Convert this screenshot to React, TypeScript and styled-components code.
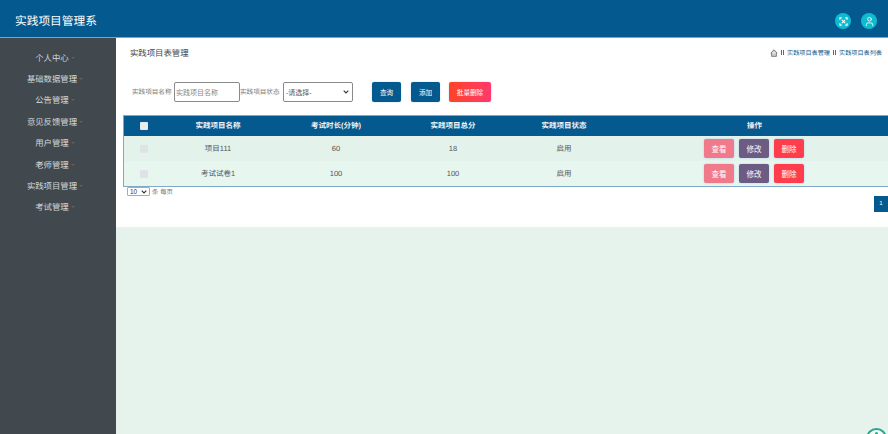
import React from "react";
import styled, { createGlobalStyle } from "styled-components";
import { User } from "lucide-react";

const arrow = `url("data:image/svg+xml,%3Csvg xmlns='http://www.w3.org/2000/svg' width='6' height='4' viewBox='0 0 6 4'%3E%3Cpath d='M.7.7 3 3 5.3.7' fill='none' stroke='%23333' stroke-width='1.1'/%3E%3C/svg%3E")`;

const Global = createGlobalStyle`
  html, body { margin: 0; padding: 0; height: 100%; overflow: hidden; }
  body { font-family: "Liberation Sans", "Noto Sans CJK SC", sans-serif; background: #e6f2ec; text-rendering: geometricPrecision; }
  #root { height: 100%; }
  * { box-sizing: border-box; }
`;

const Page = styled.div`
  display: flex; flex-direction: column; width: 888px; height: 434px; position: relative; overflow: hidden;
`;
const Header = styled.header`
  height: 38px; flex: none; background: #04598e; display: flex; align-items: center;
  padding: 0 11px 0 15px; justify-content: space-between; border-bottom: 1px solid #7ba6c4;
`;
const Brand = styled.div`
  color: #fff; font-size: 11.7px; line-height: 1; margin-top: 7px;
`;
const HeaderIcons = styled.div`
  display: flex; gap: 10px; margin-top: 5px;
`;
const RoundIcon = styled.span`
  width: 16px; height: 16px; border-radius: 50%; background: #0fbccf; color: #fff;
  display: flex; align-items: center; justify-content: center;
`;
const Body = styled.div`
  display: flex; flex: 1; min-height: 0;
`;
const Sidebar = styled.nav`
  width: 116px; flex: none; background: #41494e; padding-top: 9px;
  display: flex; flex-direction: column;
`;
const MenuItem = styled.div`
  height: 21.4px; padding-right: 12px; display: flex; align-items: center; justify-content: center;
  color: #d4d8d8; font-size: 8.4px; gap: 2px;
`;
const Caret = styled.span`
  width: 0; height: 0; border-left: 2px solid transparent; border-right: 2px solid transparent;
  border-top: 2px solid #5a6368; margin-right: -6px;
`;
const Main = styled.main`
  flex: 1; min-width: 0;
`;
const Card = styled.section`
  background: #fff; height: 189px; padding: 0 0 0 7px; display: flex; flex-direction: column;
`;
const TopRow = styled.div`
  height: 29px; padding: 0 6px 0 7px; display: flex; align-items: center; justify-content: space-between;
`;
const Title = styled.h2`
  margin: 0; font-weight: 400; font-size: 8.4px; color: #444;
`;
const Crumbs = styled.div`
  display: flex; align-items: center; gap: 3px; font-size: 6.15px; color: #04598e;
`;
const Sep = styled.span`
  width: 3px; height: 5px; border-left: 1px solid #5a6a74; border-right: 1px solid #5a6a74;
`;
const Toolbar = styled.div`
  height: 20px; margin-top: 15px; padding-left: 9px; display: flex; align-items: center;
`;
const FieldLabel = styled.label`
  font-size: 6.6px; color: #777; width: 42px; flex: none; white-space: nowrap; margin-top: -2px;
`;
const TextInput = styled.input`
  width: 66px; height: 20px; border: 1px solid #8a8a8a; border-radius: 2px; padding: 0 0 0 1px;
  font: 7px "Liberation Sans", "Noto Sans CJK SC", sans-serif; background: #fff;
  &::placeholder { color: #888; }
`;
const SelectBox = styled.select`
  appearance: none; width: 70px; height: 20px; border: 1px solid #8a8a8a; border-radius: 2px; color: #555; padding: 0 0 0 2px;
  background: #fff ${arrow} no-repeat right 3px center;
  font: 7px "Liberation Sans", "Noto Sans CJK SC", sans-serif; margin-left: 1px;
`;
const ToolButton = styled.button<{ $w: number; $ml: number; $danger?: boolean }>`
  width: ${(p) => p.$w}px; margin-left: ${(p) => p.$ml}px; height: 20px; border: 0; border-radius: 2px;
  background: ${(p) => (p.$danger ? "linear-gradient(90deg,#ff4326,#ff3a6c)" : "#04598e")};
  box-shadow: 0 0 2px #b9d4e6; color: #fff; padding: 0;
  font: 6.6px "Liberation Sans", "Noto Sans CJK SC", sans-serif;
`;
const Table = styled.div`
  margin-top: 13px; border-left: 1px solid #7fa9c8; border-bottom: 1px solid #7fa9c8; border-top: 1px solid #7fa9c8;
`;
const Row = styled.div<{ $bg: string; $h: number }>`
  display: grid; grid-template-columns: 39px 110px 126px 108px 114px 1fr; align-items: center;
  height: ${(p) => p.$h}px; background: ${(p) => p.$bg};
`;
const HeadCell = styled.div`
  text-align: center; color: #eef4f8; font-size: 7.5px; font-weight: 700; padding-bottom: 1.5px;
`;
const Cell = styled.div`
  text-align: center; color: #555; font-size: 7.5px;
`;
const Check = styled.span<{ $head?: boolean }>`
  display: block; width: 8px; height: 8px; margin: 0 auto; border-radius: 1px;
  background: ${(p) => (p.$head ? "#e9ecee" : "#dfe3e8")};
`;
const Actions = styled.div`
  display: flex; justify-content: center; gap: 5px; padding-right: 1px;
`;
const ActionButton = styled.button<{ $bg: string }>`
  width: 30px; height: 19px; border: 0; border-radius: 2px; background: ${(p) => p.$bg}; color: #fff; padding: 0;
  box-shadow: 0 0 2px #a9c4e6; font: 7.5px "Liberation Sans", "Noto Sans CJK SC", sans-serif;
`;
const PageSize = styled.div`
  display: flex; align-items: center; gap: 2px; margin-left: 4px; height: 9px;
  font-size: 6.4px; color: #777;
`;
const SizeSelect = styled.select`
  appearance: none; width: 23px; height: 9px; padding: 0 0 0 2px; border: 1px solid #aaa; border-radius: 1px;
  background: #fff ${arrow} no-repeat right 2px center; color: #333;
  font: 6.4px "Liberation Sans", sans-serif;
`;
const PagerRow = styled.div`
  display: flex; justify-content: flex-end;
`;
const PagerButton = styled.span`
  width: 14px; height: 16px; background: #04598e; color: #fff; font-size: 6px;
  display: flex; align-items: center; justify-content: center;
`;
const FloatBadge = styled.div`
  position: absolute; left: 866px; top: 428px; width: 21px; height: 21px; border-radius: 50%;
  border: 2px solid #2aa58c; background: #f4faf8;
  &::after {
    content: ""; position: absolute; left: 7px; top: 2px; width: 3px; height: 3px; border-radius: 50%; background: #2aa58c;
  }
`;

const menu = ["个人中心", "基础数据管理", "公告管理", "意见反馈管理", "用户管理", "老师管理", "实践项目管理", "考试管理"];
const rows = [
  { name: "项目111", time: "60", score: "18", bg: "#e4f2ec" },
  { name: "考试试卷1", time: "100", score: "100", bg: "#e8f6f0" },
];

export default function App() {
  return (
    <Page>
      <Global />
      <Header>
        <Brand>实践项目管理系</Brand>
        <HeaderIcons>
          <RoundIcon>
            <svg width="9" height="9" viewBox="0 0 10 10" fill="none" stroke="#fff" strokeWidth="1.2">
              <path d="M3.2 3.2 6.8 6.8M6.8 3.2 3.2 6.8" />
              <path d="M1 3V1H3M7 1H9V3M9 7V9H7M3 9H1V7" />
            </svg>
          </RoundIcon>
          <RoundIcon><User size={11} strokeWidth={1.8} /></RoundIcon>
        </HeaderIcons>
      </Header>
      <Body>
        <Sidebar>
          {menu.map((m) => (
            <MenuItem key={m}>{m}<Caret /></MenuItem>
          ))}
        </Sidebar>
        <Main>
          <Card>
            <TopRow>
              <Title>实践项目表管理</Title>
              <Crumbs>
                <svg width="8" height="8" viewBox="0 0 10 10" fill="#c9cdd0" stroke="#666" strokeWidth="1">
                  <path d="M.8 5.2 5 1l4.2 4.2M2 4.4V9.2h6V4.4" />
                </svg>
                <Sep />
                <span>实践项目表管理</span>
                <Sep />
                <span>实践项目表列表</span>
              </Crumbs>
            </TopRow>
            <Toolbar>
              <FieldLabel>实践项目名称</FieldLabel>
              <TextInput placeholder="实践项目名称" />
              <FieldLabel>实践项目状态</FieldLabel>
              <SelectBox defaultValue=""><option value="">-请选择-</option></SelectBox>
              <ToolButton $w={29} $ml={19}>查询</ToolButton>
              <ToolButton $w={29} $ml={10}>添加</ToolButton>
              <ToolButton $w={42} $ml={9} $danger>批量删除</ToolButton>
            </Toolbar>
            <Table>
              <Row $bg="#04598e" $h={20}>
                <Check $head />
                <HeadCell>实践项目名称</HeadCell>
                <HeadCell>考试时长(分钟)</HeadCell>
                <HeadCell>实践项目总分</HeadCell>
                <HeadCell>实践项目状态</HeadCell>
                <HeadCell>操作</HeadCell>
              </Row>
              {rows.map((r) => (
                <Row key={r.name} $bg={r.bg} $h={25}>
                  <Check />
                  <Cell>{r.name}</Cell>
                  <Cell>{r.time}</Cell>
                  <Cell>{r.score}</Cell>
                  <Cell>启用</Cell>
                  <Actions>
                    <ActionButton $bg="#f0798a">查看</ActionButton>
                    <ActionButton $bg="#6c5b82">修改</ActionButton>
                    <ActionButton $bg="#ff3d4d">删除</ActionButton>
                  </Actions>
                </Row>
              ))}
            </Table>
            <PageSize>
              <SizeSelect defaultValue="10"><option>10</option></SizeSelect>
              <span>条 每页</span>
            </PageSize>
            <PagerRow><PagerButton>1</PagerButton></PagerRow>
          </Card>
        </Main>
      </Body>
      <FloatBadge />
    </Page>
  );
}
